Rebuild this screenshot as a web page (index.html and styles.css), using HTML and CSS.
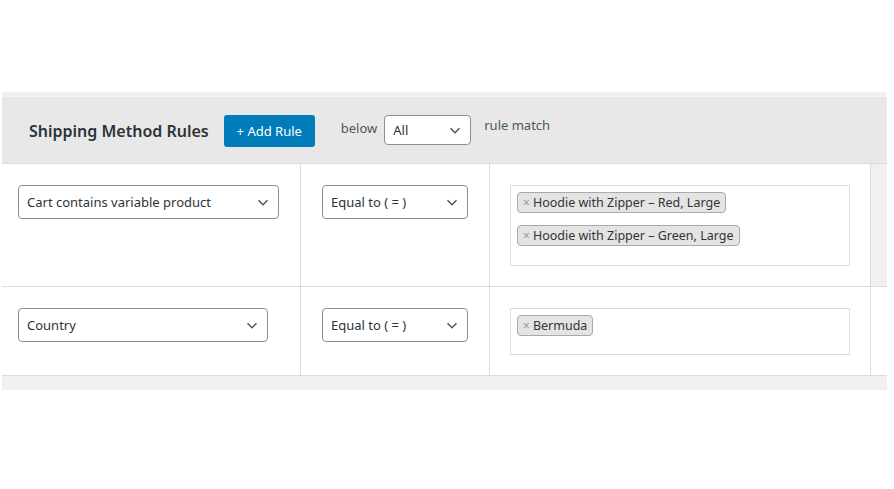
FILE: index.html
```html
<!DOCTYPE html>
<html lang="en">
<head>
    <meta charset="UTF-8">
    <meta name="viewport" content="width=device-width, initial-scale=1.0">
    <title>Shipping Method Rules</title>
    <link rel="stylesheet" href="styles.css">
</head>
<body>

    <div class="rules">
        <div class="rules-head">
            <h2 class="rules-title">Shipping Method Rules</h2>
            <button class="add-rule">+ Add Rule</button>
            <span class="label-below">below</span>
            <div class="select select-match">All</div>
            <span class="label-match">rule match</span>
        </div>

        <div class="rule-row">
            <div class="cell cell-cond">
                <div class="select select-wide">Cart contains variable product</div>
            </div>
            <div class="cell cell-op">
                <div class="select select-op">Equal to ( = )</div>
            </div>
            <div class="cell cell-val">
                <div class="multi multi-tall">
                    <span class="tag"><span class="tag-x">×</span>Hoodie with Zipper – Red, Large</span>
                    <span class="tag"><span class="tag-x">×</span>Hoodie with Zipper – Green, Large</span>
                </div>
            </div>
            <div class="cell cell-end gray"></div>
        </div>

        <div class="rule-row">
            <div class="cell cell-cond">
                <div class="select select-country">Country</div>
            </div>
            <div class="cell cell-op">
                <div class="select select-op">Equal to ( = )</div>
            </div>
            <div class="cell cell-val">
                <div class="multi">
                    <span class="tag"><span class="tag-x">×</span>Bermuda</span>
                </div>
            </div>
            <div class="cell cell-end"></div>
        </div>
    </div>

</body>
</html>
```

FILE: styles.css
```css
body {
    margin: 0;
    background: #fff;
    font-family: "Noto Sans", "Open Sans", sans-serif;
    color: #2c3338;
}

.rules {
    margin: 92px 0 0 2px;
    width: 885px;
    background: #f0f0f0;
    padding: 6px 0 14px;
}

.rules-head {
    display: flex;
    align-items: flex-start;
    height: 66px;
    box-sizing: border-box;
    padding: 16px 0 0 27px;
    background: #e8e8e8;
    border-top: 1px solid #dcdcde;
    border-bottom: 1px solid #dcdcde;
}

.rules-title {
    margin: 0;
    font-size: 16px;
    font-weight: 600;
    line-height: 32px;
    color: #2c3338;
}

.add-rule {
    margin-left: 15px;
    width: 91px;
    height: 32px;
    background: #007cba;
    color: #fff;
    border: none;
    border-radius: 3px;
    font-family: inherit;
    font-size: 13px;
    cursor: pointer;
}

.label-below {
    margin: 6px 0 0 26px;
    font-size: 13px;
    line-height: 14px;
    color: #50575e;
}

.label-match {
    margin: 3px 0 0 13px;
    font-size: 13px;
    line-height: 14px;
    color: #50575e;
}

/* Селекты */
.select {
    box-sizing: border-box;
    height: 34px;
    padding: 0 30px 0 8px;
    border: 1px solid #8c8f94;
    border-radius: 4px;
    background: #fff url("data:image/svg+xml;utf8,<svg xmlns='http://www.w3.org/2000/svg' width='20' height='20' viewBox='0 0 20 20'><path d='M5 8l5 5 5-5' fill='none' stroke='%23555' stroke-width='1.6'/></svg>") no-repeat right 6px center / 18px 18px;
    font-size: 13px;
    line-height: 32px;
    color: #2c3338;
    white-space: nowrap;
}

.select-match {
    margin-left: 7px;
    width: 87px;
    height: 30px;
    line-height: 28px;
}

.select-wide { width: 261px; }
.select-country { width: 250px; }
.select-op { width: 146px; }

.rule-row {
    display: grid;
    grid-template-columns: 299px 189px 381px 16px;
    background: #fff;
    border-bottom: 1px solid #dcdcde;
}

.cell {
    box-sizing: border-box;
    padding: 21px 0 20px;
    border-right: 1px solid #dcdcde;
}

.cell-cond { padding-left: 16px; }
.cell-op { padding-left: 21px; }
.cell-val { padding-left: 20px; }

.cell-end { border-right: none; }
.cell-end.gray { background: #f0f0f0; }

.multi {
    box-sizing: border-box;
    width: 340px;
    min-height: 47px;
    padding: 6px 6px 0;
    border: 1px solid #dcdcde;
    display: flex;
    flex-direction: column;
    align-items: flex-start;
    gap: 12px;
}

.multi-tall { height: 81px; }

.tag {
    box-sizing: border-box;
    height: 21px;
    padding: 0 5px;
    background: #e4e4e4;
    border: 1px solid #aaa;
    border-radius: 4px;
    font-size: 12.5px;
    line-height: 19px;
    color: #333;
}

.tag-x {
    margin-right: 3px;
    color: #999;
    font-size: 12px;
}
```
